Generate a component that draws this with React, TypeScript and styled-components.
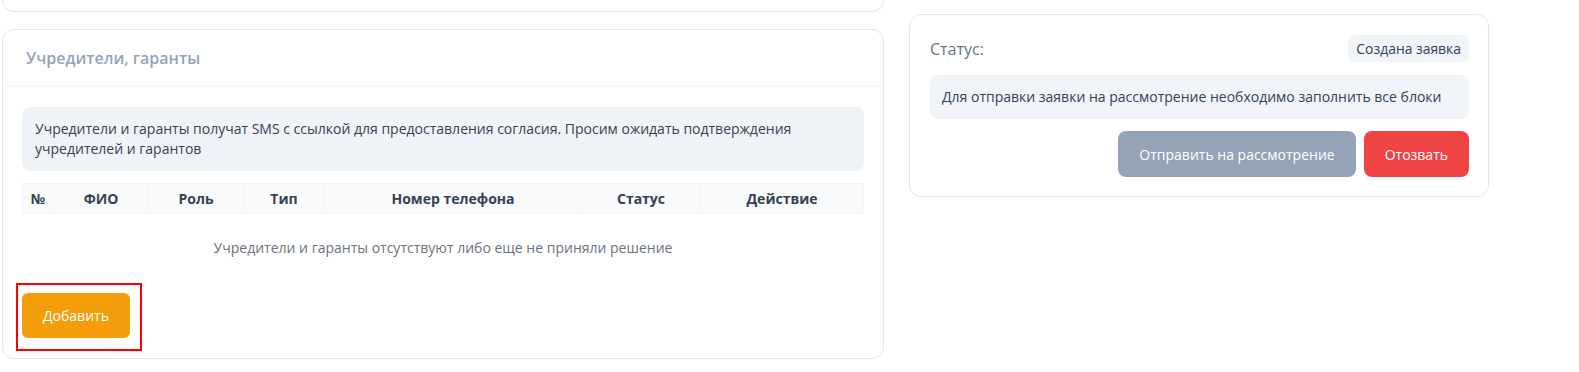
import styled, {createGlobalStyle} from 'styled-components';

const GlobalStyle = createGlobalStyle`
    html, body {
        margin: 0;
        padding: 0;
        background: #ffffff;
        font-family: 'Open Sans', 'Noto Sans', sans-serif;
    }
    * {
        box-sizing: border-box;
    }
`;

const columns = [
    {title: '№', width: 31},
    {title: 'ФИО', width: 95},
    {title: 'Роль', width: 95},
    {title: 'Тип', width: 81},
    {title: 'Номер телефона', width: 257},
    {title: 'Статус', width: 119},
    {title: 'Действие', width: 163},
];

const App: React.FC = function () {
    return (
        <>
            <GlobalStyle />
            <Page>
                <LeftColumn>
                    <ClippedCard />
                    <Card>
                        <CardHeader>
                            <CardTitle>Учредители, гаранты</CardTitle>
                        </CardHeader>
                        <CardBody>
                            <InfoBox>
                                Учредители и гаранты получат SMS с ссылкой для предоставления согласия. Просим
                                ожидать подтверждения учредителей и гарантов
                            </InfoBox>
                            <Table>
                                <colgroup>
                                    {columns.map(c => (
                                        <col key={c.title} width={c.width} />
                                    ))}
                                </colgroup>
                                <thead>
                                    <tr>
                                        {columns.map(c => (
                                            <HeadCell key={c.title}>{c.title}</HeadCell>
                                        ))}
                                    </tr>
                                </thead>
                            </Table>
                            <EmptyMessage>Учредители и гаранты отсутствуют либо еще не приняли решение</EmptyMessage>
                            <ButtonHolder>
                                <Button $variant="orange">Добавить</Button>
                                <Highlight />
                            </ButtonHolder>
                        </CardBody>
                    </Card>
                </LeftColumn>
                <StatusCard>
                    <StatusRow>
                        <StatusLabel>Статус:</StatusLabel>
                        <Badge>Создана заявка</Badge>
                    </StatusRow>
                    <StatusNote>Для отправки заявки на рассмотрение необходимо заполнить все блоки</StatusNote>
                    <Actions>
                        <Button $variant="gray">Отправить на рассмотрение</Button>
                        <Button $variant="red">Отозвать</Button>
                    </Actions>
                </StatusCard>
            </Page>
        </>
    );
};

/* Styled components */

const Page = styled.div`
    display: flex;
    align-items: flex-start;
    gap: 25px;
    padding-left: 2px;
    width: 1579px;
    height: 372px;
    overflow: hidden;
`;

const LeftColumn = styled.div`
    width: 882px;
    display: flex;
    flex-direction: column;
    gap: 17px;
`;

const ClippedCard = styled.div`
    height: 12px;
    border: 1px solid #e5e7eb;
    border-top: none;
    border-radius: 0 0 12px 12px;
    background: #ffffff;
`;

const Card = styled.div`
    border: 1px solid #e5e7eb;
    border-radius: 12px;
    background: #ffffff;
`;

const CardHeader = styled.div`
    height: 57px;
    display: flex;
    align-items: center;
    padding: 0 23px;
    border-bottom: 1px solid #f1f3f6;
`;

const CardTitle = styled.div`
    font-size: 16px;
    font-weight: 600;
    color: #94a3b8;
`;

const CardBody = styled.div`
    padding: 20px 19px 20px 19px;
`;

const InfoBox = styled.div`
    background: #f0f3f8;
    border-radius: 8px;
    padding: 12px 13px;
    font-size: 14px;
    line-height: 20px;
    color: #374151;
`;

const Table = styled.table`
    margin-top: 12px;
    width: 841px;
    table-layout: fixed;
    border-collapse: collapse;
`;

const HeadCell = styled.th`
    height: 30px;
    padding: 0;
    background: #f8fafc;
    border: 1px solid #f1f4f8;
    font-size: 14px;
    font-weight: 700;
    color: #374151;
    text-align: center;
`;

const EmptyMessage = styled.div`
    padding: 24px 0 23px;
    text-align: center;
    font-size: 14px;
    line-height: 20px;
    color: #6b7280;
`;

const ButtonHolder = styled.div`
    position: relative;
    display: inline-flex;
    margin-top: 12px;
`;

const Highlight = styled.div`
    position: absolute;
    top: -10px;
    left: -6px;
    right: -12px;
    bottom: -13px;
    border: 2px solid #ff0000;
    pointer-events: none;
`;

const paddings = {orange: '12px 21px', gray: '12px 21px', red: '12px 21px'};
const backgrounds = {orange: '#f59e0b', gray: '#94a3b8', red: '#ef4444'};

const Button = styled.button<{$variant: 'orange' | 'gray' | 'red'}>`
    border: none;
    font-family: inherit;
    font-size: 14px;
    line-height: 21px;
    color: #ffffff;
    padding: ${p => paddings[p.$variant]};
    border-radius: ${p => (p.$variant === 'orange' ? '6px' : '8px')};
    height: ${p => (p.$variant === 'orange' ? '45px' : '46px')};
    background: ${p => backgrounds[p.$variant]};
    cursor: pointer;
`;

const StatusCard = styled.div`
    margin-top: 14px;
    width: 580px;
    border: 1px solid #e2e8f0;
    border-radius: 12px;
    padding: 20px 19px 19px 20px;
    display: flex;
    flex-direction: column;
    gap: 13px;
`;

const StatusRow = styled.div`
    display: flex;
    align-items: center;
    justify-content: space-between;
`;

const StatusLabel = styled.div`
    font-size: 16px;
    color: #64748b;
`;

const Badge = styled.div`
    height: 27px;
    display: flex;
    align-items: center;
    padding: 0 8px;
    background: #f1f5f9;
    border-radius: 7px;
    font-size: 13.9px;
    color: #334155;
`;

const StatusNote = styled.div`
    background: #f1f5f9;
    border-radius: 8px;
    padding: 12px 12px;
    font-size: 14px;
    line-height: 20px;
    color: #334155;
`;

const Actions = styled.div`
    display: flex;
    justify-content: flex-end;
    gap: 8px;
    margin-top: -1px;
`;

export default App;
